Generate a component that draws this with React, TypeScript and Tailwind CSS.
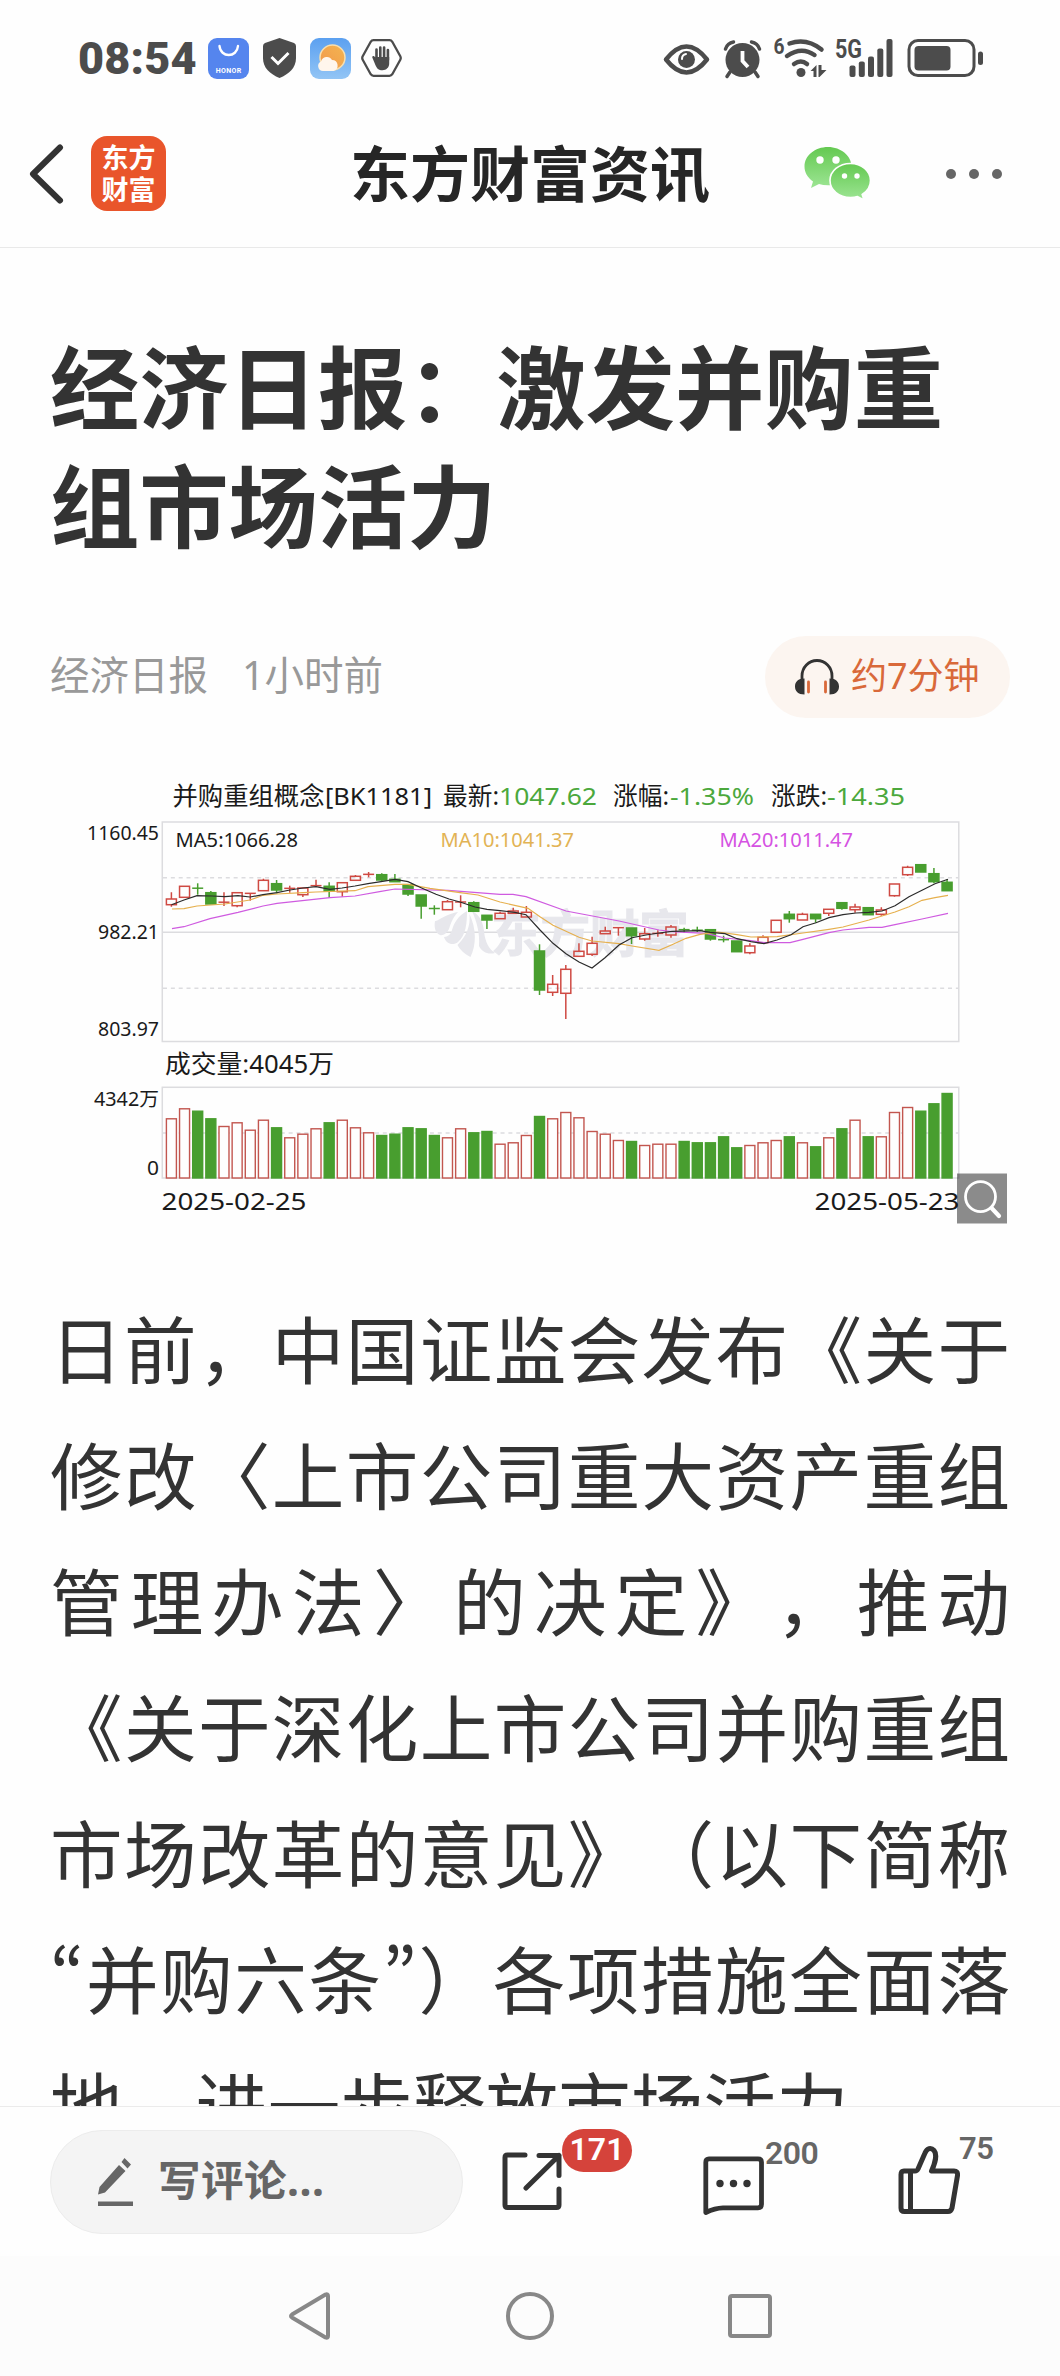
import type { ReactNode } from "react";

type Candle = [up: number, top: number, bottom: number, high: number, low: number, volume: number];

// up (1 = red), body top, body bottom, high, low, top of the volume bar
const candles: Candle[] = [
  [1, 899, 904.7, 892.3, 906.7, 1118.3],
  [1, 886.3, 897.3, 886.3, 897.3, 1108.3],
  [0, 887.7, 888.7, 883.3, 894.7, 1110.7],
  [0, 892.7, 904, 891, 904, 1118.3],
  [1, 901.7, 902.7, 892.3, 906, 1126],
  [1, 892.7, 905.7, 892, 907.3, 1122.3],
  [1, 893, 893.7, 893, 900.7, 1129.7],
  [1, 880.3, 890.7, 878.7, 890.7, 1119.7],
  [0, 883.7, 890, 880, 893.3, 1127.3],
  [1, 888, 888.7, 885.7, 892.7, 1137.3],
  [1, 888, 894.7, 888, 897, 1133.7],
  [1, 885.3, 886, 879.7, 886.7, 1128.3],
  [0, 886.3, 891, 882.3, 897.7, 1122.3],
  [1, 882.7, 891.7, 882.7, 896.7, 1119.7],
  [1, 876.3, 880.3, 875, 880.3, 1127.3],
  [1, 874, 874.7, 872, 877.3, 1132.3],
  [0, 874.7, 880, 873.3, 881, 1135],
  [0, 879.3, 881.7, 874, 881.7, 1133.7],
  [0, 884.7, 894, 884.7, 896, 1127.3],
  [0, 895, 906, 895, 918.7, 1128.3],
  [0, 908, 909, 905.3, 914.7, 1135],
  [1, 901.7, 909.7, 900, 909.7, 1137.3],
  [1, 901.7, 902.3, 895.3, 907.3, 1128.3],
  [0, 902.7, 911.3, 901.3, 911.3, 1132.3],
  [0, 915.3, 920, 915.3, 929, 1131],
  [1, 913.3, 918.7, 911.7, 918.7, 1143.7],
  [1, 911, 913.3, 907.7, 913.3, 1142.3],
  [1, 912.3, 917, 906, 917, 1135],
  [0, 951, 990, 944.3, 995, 1116],
  [1, 984.3, 992.3, 975, 996, 1118.3],
  [1, 969.3, 993.3, 965, 1019, 1112],
  [1, 951.3, 956.3, 943.3, 956.3, 1117.3],
  [1, 943.3, 954.3, 936.7, 956, 1131],
  [1, 931, 933.7, 926.7, 933.7, 1133.7],
  [1, 927, 928.3, 927, 935.7, 1140],
  [0, 928, 935.7, 928, 944, 1141],
  [1, 933.7, 939, 928, 940.7, 1145],
  [1, 933, 933.7, 930.3, 936.7, 1143.7],
  [1, 927, 935, 925, 937.7, 1143.7],
  [0, 929.3, 930, 927.7, 932.7, 1141],
  [0, 929.7, 930.7, 926.7, 932, 1142.3],
  [0, 929.7, 939, 929.7, 940.7, 1142.3],
  [0, 939.3, 940, 935.7, 942.3, 1136.3],
  [0, 941, 951.7, 941, 951.7, 1147.3],
  [1, 946, 952.7, 943.3, 954.3, 1145],
  [1, 937.3, 942.7, 935.3, 943, 1142.3],
  [1, 920.3, 932.3, 920.3, 932.3, 1140],
  [0, 914.3, 918.7, 911, 922.7, 1136.3],
  [1, 914.3, 920, 912.7, 920, 1142.3],
  [0, 914.3, 918.7, 914.3, 922.7, 1146.3],
  [1, 909.3, 913.3, 909.3, 916, 1137.3],
  [0, 902.7, 908.3, 902.7, 909.7, 1128.3],
  [1, 907, 909.7, 903.7, 912.7, 1119.7],
  [0, 907.7, 914.7, 907.7, 914.7, 1136.3],
  [1, 910, 914.3, 907.3, 915.7, 1136.3],
  [1, 884, 895.7, 884, 896.7, 1112],
  [1, 867.3, 874.7, 865.7, 876, 1107],
  [0, 864.7, 872, 864.7, 872, 1110.7],
  [0, 873.7, 881.7, 868, 883.3, 1103.3],
  [0, 882.3, 890.7, 879.3, 890.7, 1093],
];

const ma5 =
  "171.5,904.7 184,900 197,895.7 212,896 225,896.7 238,895.7 250,897 263,894.7 277,892.7 290,890 303,888 316,886.7 330,889.3 342,888 355,886 368,883.7 381,881.7 395,879.3 408,881.7 421,887.7 436,894.3 449,899 460,902 475,907 487,909.3 500,910.7 515,912.3 526,914.7 540,930 553,943.3 566,953.7 579,962 592,968 605,957.7 619,945 632,937.7 646,935 659,933 672,931.3 700,930.7 710,932.3 725,933.7 737,938.7 751,941.7 764,943.7 777,940 791,934.7 803,926.7 816,922.7 829,917.7 843,914.7 856,913 869,912.3 882,911 895,905.7 909,896.7 922,890.3 935,883.7 948,879.3";
const ma10 =
  "172,909 184,908.7 197,906 225,904 250,900 263,895.3 277,894 303,892.7 316,892 355,890.7 368,886.7 395,884.3 408,884.3 430,888.3 460,892.7 478,895 500,902 528,908.3 540,916.7 553,925.3 579,937.3 592,941 619,943.7 632,946 659,950.3 672,944.7 686,938.3 700,934.3 718,932 737,934.7 751,937 777,936.7 803,933 829,929.3 843,927 869,920 882,916 895,912 909,906.7 922,900.3 935,897.7 948,895.3";
const ma20 =
  "172,928.7 184,926.7 210,918.7 238,912.3 263,906 277,903.3 330,897.7 355,896 381,891.3 395,889 448,890.3 500,894.3 513,894.3 526,896.7 566,911 619,921 659,930 672,931.7 706,933.3 725,938 751,940.7 764,942.7 790,942.7 803,939.3 829,932.7 843,930 869,927.3 882,927.3 895,924.7 922,919 948,913.3";

type Label = { x: number; y: number; w: number; size: number; color: string; text: string };

const labels: Label[] = [
  { x: 172.5, y: 805, w: 152, size: 25, color: "#1a1a1a", text: "并购重组概念" },
  { x: 325, y: 804.5, w: 107, size: 24, color: "#1a1a1a", text: "[BK1181]" },
  { x: 443, y: 805, w: 56, size: 25, color: "#1a1a1a", text: "最新:" },
  { x: 499, y: 804.5, w: 98, size: 24, color: "#4ba83c", text: "1047.62" },
  { x: 613, y: 805, w: 56, size: 25, color: "#1a1a1a", text: "涨幅:" },
  { x: 670, y: 804.5, w: 84, size: 24, color: "#4ba83c", text: "-1.35%" },
  { x: 771, y: 805, w: 56, size: 25, color: "#1a1a1a", text: "涨跌:" },
  { x: 827, y: 804.5, w: 78, size: 24, color: "#4ba83c", text: "-14.35" },
  { x: 87, y: 840, w: 72, size: 19.5, color: "#1a1a1a", text: "1160.45" },
  { x: 98, y: 938.5, w: 61, size: 19.5, color: "#1a1a1a", text: "982.21" },
  { x: 98, y: 1036, w: 61, size: 19.5, color: "#1a1a1a", text: "803.97" },
  { x: 175.5, y: 846.5, w: 122.5, size: 19.5, color: "#1a1a1a", text: "MA5:1066.28" },
  { x: 440.5, y: 846.5, w: 133.5, size: 19.5, color: "#e2b354", text: "MA10:1041.37" },
  { x: 719.5, y: 846.5, w: 133.5, size: 19.5, color: "#d552e2", text: "MA20:1011.47" },
  { x: 165, y: 1072.5, w: 169, size: 24.5, color: "#1a1a1a", text: "成交量:4045万" },
  { x: 94, y: 1105.5, w: 65, size: 19.5, color: "#1a1a1a", text: "4342万" },
  { x: 147, y: 1175, w: 12, size: 19.5, color: "#1a1a1a", text: "0" },
  { x: 161.5, y: 1209.5, w: 145, size: 24, color: "#1a1a1a", text: "2025-02-25" },
  { x: 814.5, y: 1209.5, w: 145, size: 24, color: "#1a1a1a", text: "2025-05-23" },
];

const lines: ReactNode[] = [
  "日前，中国证监会发布《关于",
  "修改〈上市公司重大资产重组",
  "管理办法〉的决定》，推动",
  "《关于深化上市公司并购重组",
  "市场改革的意见》（以下简称",
  <>
    <Quote>“</Quote>并购六条<Quote>”</Quote>）各项措施全面落
  </>,
];

// proportional curly quotes of the CJK face
function Quote({ children }: { children: string }) {
  return <span className="font-['Noto_Sans_CJK_SC'] leading-none [font-feature-settings:'pwid']">{children}</span>;
}

function StatusBar() {
  return (
    <div className="flex h-[104px] items-center justify-between pt-3 pr-[76px] pl-[78px]">
      <div className="flex items-center">
        <span className="w-[130px] font-[Roboto] text-[45px] leading-none font-black tracking-[0.2px] text-[#4c4c4c]">
          08:54
        </span>
        <svg width="41" height="41" viewBox="0 0 41 41">
          <rect width="41" height="41" rx="9" fill="#5585ee" />
          <path d="M11.500 8c1 12 17.500 12 18.500 0" fill="none" stroke="#fff" strokeWidth="2.400" strokeLinecap="round" />
          <text x="7.800" y="35" fontSize="7" fontWeight="700" fontFamily="Roboto" fill="#fff" textLength="25.500">
            HONOR
          </text>
        </svg>
        <svg className="ml-[14px]" width="33" height="40" viewBox="0 0 33 40">
          <path d="M16.500 0 31 5q2 1 2 3v12c0 10-7 16-16.500 20C7 36 0 30 0 20V8q0-2 2-3Z" fill="#4c4c4c" />
          <path d="m8.500 19 6.500 6.500L25.500 15" fill="none" stroke="#fff" strokeWidth="3" />
        </svg>
        <svg className="ml-[14px]" width="41" height="41" viewBox="0 0 41 41">
          <defs>
            <linearGradient id="sky" x2="0" y2="1">
              <stop stopColor="#5ba0f0" />
              <stop offset="1" stopColor="#93c5f5" />
            </linearGradient>
            <linearGradient id="sun" x1="1" x2="0" y2="1">
              <stop stopColor="#f3b551" />
              <stop offset="1" stopColor="#f2974a" />
            </linearGradient>
          </defs>
          <rect width="41" height="41" rx="9" fill="url(#sky)" />
          <circle cx="22.500" cy="19.500" r="12.500" fill="url(#sun)" stroke="#f8dfae" strokeWidth="1.500" />
          <path d="M13 33a5 5 0 0 1-2-9.500 6 6 0 0 1 11-1.500 5.600 5.600 0 0 1 1.500 11Z" fill="#fff6ec" />
        </svg>
        <svg className="ml-[10px]" width="41" height="38" viewBox="0 0 41 38">
          <path
            d="M12.500 1.200h16q1.800 0 2.800 1.600l8 14.500q.9 1.700 0 3.400l-8 14.500q-1 1.600-2.800 1.600h-16q-1.800 0-2.800-1.600l-8-14.500q-.9-1.700 0-3.400l8-14.500q1-1.600 2.800-1.600Z"
            fill="none"
            stroke="#4c4c4c"
            strokeWidth="2.300"
          />
          <path
            d="M15.500 21V10.500M19.300 20V8.500M23.100 20V8.500M26.900 21V11"
            stroke="#4c4c4c"
            strokeWidth="2.600"
            strokeLinecap="round"
          />
          <path d="M14.200 18h14v6.500c0 4-3 6.700-6.700 6.700-4 0-5.700-2-7-5l-3.200-7.700c-.4-1.500 1.600-2 2.400-.8l1.500 2.500Z" fill="#4c4c4c" />
        </svg>
      </div>

      <svg className="overflow-visible" width="320" height="42" viewBox="664 37 320 42" fill="#4c4c4c">
        <path d="M666 59.500q20.500-26 41 0-20.500 26-41 0Z" fill="none" stroke="#4c4c4c" strokeWidth="4.500" strokeLinejoin="round" />
        <circle cx="686.500" cy="59.500" r="8.500" />
        <path d="M682 59a5 5 0 0 1 4-5" fill="none" stroke="#fff" strokeWidth="2" strokeLinecap="round" />
        <circle cx="742.500" cy="60" r="17" />
        <path d="M725.500 49q2-6 8-7M759.500 49q-2-6-8-7M730 72l-3 4.500M755 72l3 4.500" fill="none" stroke="#4c4c4c" strokeWidth="3.500" strokeLinecap="round" />
        <path d="M742.500 51v10l5.500 6" fill="none" stroke="#fff" strokeWidth="3.800" />
        <text x="773.500" y="54" fontSize="22" fontWeight="700" fontFamily="Roboto" textLength="11" lengthAdjust="spacingAndGlyphs">
          6
        </text>
        <g fill="none" stroke="#4c4c4c" strokeWidth="4.500" strokeLinecap="round">
          <path d="M789.500 43.500q17-6 32 6" />
          <path d="M787 56q14.500-10 27.500-1" />
          <path d="M794 64q7-5 13 0" />
        </g>
        <circle cx="801" cy="72.500" r="4.500" />
        <path d="M810.500 71l6-6v12h-3v-6ZM818.500 65h3v5h5l-7 7h-1Z" />
        <text x="835" y="58" fontSize="25" fontWeight="700" fontFamily="Roboto" textLength="27" lengthAdjust="spacingAndGlyphs">
          5G
        </text>
        <rect x="849.500" y="65.500" width="6" height="11.500" rx="2" />
        <rect x="858.800" y="61.500" width="6" height="15.500" rx="2" />
        <rect x="868" y="56.500" width="6" height="20.500" rx="2" />
        <rect x="877.300" y="48.500" width="6" height="28.500" rx="2" />
        <rect x="886.500" y="39" width="6" height="38" rx="2" />
        <rect x="909" y="40.500" width="65" height="35" rx="9" fill="none" stroke="#4c4c4c" strokeWidth="3" />
        <rect x="914.500" y="46" width="36" height="24.500" rx="4" />
        <rect x="978" y="51.500" width="5" height="13.500" rx="2.500" />
      </svg>
    </div>
  );
}

function Header() {
  return (
    <header className="relative flex h-[144px] items-center border-b border-[#e9e9e9] pb-[4px] pl-[29px]">
      <svg width="35" height="60" viewBox="0 0 35 60" fill="none" stroke="#333" strokeWidth="6" strokeLinecap="round" strokeLinejoin="round">
        <path d="M31 3.500 4 30l27 26.500" />
      </svg>
      <div className="ml-[27px] flex size-[75px] flex-col items-center justify-center rounded-[16px] bg-[#e9552b] text-[27px] leading-[32px] font-bold text-white">
        <span>东方</span>
        <span>财富</span>
      </div>
      <h2 className="ml-[184px] pt-px text-[60px] leading-none font-bold text-[#262626]">东方财富资讯</h2>
      <svg className="ml-[94px]" width="67" height="56" viewBox="0 0 67 56">
        <defs>
          <linearGradient id="wx" x2="0" y2="1">
            <stop stopColor="#64c951" />
            <stop offset="1" stopColor="#9de594" />
          </linearGradient>
        </defs>
        <path d="M24 1C11 1 .5 9.500.5 20.500c0 6 3 11 8.500 15L7 42l8-4q4 1.300 9 1.300C37 39.300 47.500 31 47.500 20.500S37 1 24 1Z" fill="url(#wx)" />
        <path
          d="M46.500 17.500c-11.500 0-20.500 7.500-20.500 17s9 17 20.500 17q4 0 7-1l6.500 3.500-1.800-5.500c5-3.200 8.300-8 8.300-14 0-9.500-9-17-20-17Z"
          fill="url(#wx)"
          stroke="#fefefe"
          strokeWidth="1.600"
        />
        <g fill="#fff">
          <circle cx="16" cy="14" r="3.700" />
          <circle cx="32" cy="14" r="3.700" />
          <circle cx="40.500" cy="30" r="2.700" />
          <circle cx="53" cy="30" r="2.700" />
        </g>
      </svg>
      <div className="ml-[75px] flex gap-[13px]">
        <i className="size-[10px] rounded-full bg-[#666]" />
        <i className="size-[10px] rounded-full bg-[#666]" />
        <i className="size-[10px] rounded-full bg-[#666]" />
      </div>
    </header>
  );
}

function Chart() {
  return (
    <svg className="block" width="960" height="460" viewBox="50 770 960 460" fontFamily="'Noto Sans', 'Noto Sans CJK SC', sans-serif">
      <g fill="none" stroke="#dcdcdf" strokeWidth="1.500">
        <rect x="162.300" y="822" width="796.500" height="219.500" />
        <path d="M162 932.300h797" />
        <rect x="162.300" y="1087.300" width="796.500" height="90.700" />
        <path d="M163 877.700h796M163 988.300h796M163 1133h796" strokeDasharray="4 3.850" />
      </g>

      {/* watermark */}
      <g fill="#e7e7ec">
        <path d="M435 921c4 0 8-6 23-9-5 5-7 11-9 17-2 4-6 7-9 6-5-2-6-8-5-14Z" />
        <path d="M467 911c-9 5-13 12-15 19-1 4-4 7-8 7 2 7 9 9 14 5 8-7 9-19 9-31Z" />
        <path d="M469.500 914c1 12-3 22-12 31 2 4 7 9 13 12 6-12 6-28-1-43Z" />
        <path d="M472 911c9 5 11 12 12 20 1 11 5 18 11 22-7 2-13-1-16-7 1-12-2-24-7-35Z" />
        <text x="491" y="952" fontSize="50" fontWeight="700" textLength="198" stroke="#e7e7ec" strokeWidth="1">
          东方财富
        </text>
      </g>

      {candles.map(([up, top, bottom, high, low, volume], i) => {
        const x = 171.4 + i * 13.147;
        const flat = bottom - top < 1.5;
        const color = up ? "#cf4a43" : "#489e2f";
        return (
          <g key={i} stroke={color} strokeWidth="1.500" fill={up ? "#fefefe" : color}>
            {(flat || !up) && <path d={`M${x} ${high}V${low}`} />}
            {!flat && !!up && <path d={`M${x} ${high}V${top}M${x} ${bottom}V${low}`} />}
            {flat ? (
              <path d={`M${x - 5.5} ${(top + bottom) / 2}h11`} />
            ) : (
              <rect x={x - 5} y={top} width="10" height={bottom - top} fillOpacity={up ? 0 : 1} />
            )}
            <rect x={x - 5} y={volume + 0.5} width="10" height={1177.5 - volume} strokeWidth="1.400" stroke={up ? "#c2564f" : color} />
          </g>
        );
      })}

      <g fill="none" strokeWidth="1.200">
        <polyline points={ma20} stroke="#cf5be0" />
        <polyline points={ma10} stroke="#e6b04e" />
        <polyline points={ma5} stroke="#2b2b2b" />
      </g>

      {labels.map((l) => (
        <text key={l.text} x={l.x} y={l.y} fontSize={l.size} fill={l.color} textLength={l.w} lengthAdjust="spacingAndGlyphs">
          {l.text}
        </text>
      ))}

      <rect x="957" y="1173.500" width="50" height="50" fill="#000" fillOpacity="0.450" />
      <g fill="none" stroke="#fff" strokeWidth="2.800" strokeLinecap="round">
        <circle cx="980.500" cy="1196.700" r="15" />
        <path d="m992 1208.500 7 7.500" strokeWidth="4.200" />
      </g>
    </svg>
  );
}

function Action({ children, count }: { children: ReactNode; count: ReactNode }) {
  return (
    <button className="relative block">
      {children}
      {count}
    </button>
  );
}

function Footer() {
  return (
    <footer className="flex h-[150px] border-t border-[#ebebeb] bg-[#fefefe] pl-[50px]">
      <div className="mt-[23px] flex h-[104px] w-[413px] items-center rounded-full border border-[#ececec] bg-[#f4f4f4] pl-[47px]">
        <svg width="35" height="48" viewBox="0 0 35 48" fill="#666">
          <path d="m21 7 6.500 6L7 34.500 0 36.500 1.500 29ZM26.500 0 33 6.500l-3.500 4-6-6.500ZM0 43.500h35V48H0Z" />
        </svg>
        <span className="ml-[25px] pb-[3px] text-[42.5px] leading-none font-bold tracking-[0.5px] text-[#666]">
          写评论...
        </span>
      </div>
      <div className="mt-[38px] ml-[39px] flex h-[70px] items-end">
        <Action
          count={
            <span className="absolute -top-[22px] left-[60px] flex h-[43px] w-[70px] items-center justify-center rounded-full bg-[#d5433b] pb-[3px] font-[Roboto] text-[32px] font-semibold text-white">
              171
            </span>
          }
        >
          <svg className="mb-[4px] block" width="60" height="60" viewBox="0 0 60 60" fill="none" stroke="#333" strokeWidth="5" strokeLinecap="round" strokeLinejoin="round">
            <path d="M23 4H5.500Q3 4 3 6.500V54q0 2.500 2.500 2.500h49Q57 56.500 57 54V38" />
            <path d="M37 4.500h20v20M57 4.500 24 37" />
          </svg>
        </Action>
        <div className="ml-[141px]">
          <Action
            count={
              <span className="absolute -top-[19px] left-[62px] font-[Roboto] text-[32px] leading-none font-semibold tracking-[-0.5px] text-[#666]">
                200
              </span>
            }
          >
            <svg className="block" width="61" height="59" viewBox="0 0 61 59" fill="none" stroke="#333" strokeWidth="4.800" strokeLinejoin="round">
              <path d="M6 2.800h49q3.500 0 3.500 3.500v42q0 3.500-3.500 3.500H20Q12 52 2.800 56.500V6.300Q2.800 2.800 6 2.800Z" />
              <g fill="#333" stroke="none">
                <circle cx="17" cy="27.500" r="3.700" />
                <circle cx="30.500" cy="27.500" r="3.700" />
                <circle cx="44" cy="27.500" r="3.700" />
              </g>
            </svg>
          </Action>
        </div>
        <div className="ml-[134px]">
          <Action
            count={
              <span className="absolute -top-[12px] left-[61px] font-[Roboto] text-[31px] leading-none font-semibold tracking-[-0.5px] text-[#666]">
                75
              </span>
            }
          >
            <svg className="block" width="62" height="70" viewBox="0 0 62 70" fill="none" stroke="#333" strokeWidth="5" strokeLinejoin="round">
              <path d="M6 26h11q2 0 3-2l7-16c2-5 6-6 9-2.500s1.500 12-2.500 20.500H56q4 0 3.500 4.500l-5.500 32.500q-1 3.500-4 3.500H6.500q-3.500 0-3.500-3.500V29.500Q3 26 6 26ZM12.500 26v40" />
            </svg>
          </Action>
        </div>
      </div>
    </footer>
  );
}

function NavBar() {
  return (
    <nav className="flex h-[120px] items-center justify-between bg-[#fcfcfc] pr-[288px] pl-[287px]">
      <svg width="44" height="50" viewBox="0 0 44 50" fill="none" stroke="#888" strokeWidth="4" strokeLinejoin="round">
        <path d="M38.500 3.500q2.500-1 2.500 1.500v40q0 2.500-2.500 1.500L5 26.500q-2-1.500 0-3Z" />
      </svg>
      <div className="size-[48px] rounded-full border-4 border-[#888]" />
      <div className="size-[44px] rounded-[4px] border-4 border-[#888]" />
    </nav>
  );
}

function App() {
  return (
    <div className="flex h-[2376px] w-[1060px] flex-col overflow-hidden bg-[#fefefe] font-['Noto_Sans','Noto_Sans_CJK_SC',sans-serif]">
      <StatusBar />
      <Header />
      <main className="h-[1858px] overflow-hidden px-[50px] pt-[80px]">
        <h1 className="text-[89.3px] leading-[119px] font-bold text-[#333] [text-spacing-trim:space-all]">
          经济日报：激发并购重组市场活力
        </h1>
        <div className="mt-[70px] flex h-[82px] items-center justify-between">
          <div className="flex gap-[34px] pb-[3px] text-[39.5px] text-[#999]">
            <span>经济日报</span>
            <span>1小时前</span>
          </div>
          <div className="flex h-[82px] w-[245px] items-center rounded-full bg-[#fcf5f0] pl-[30px] text-[#d9693a]">
            <svg width="44" height="36" viewBox="0 0 44 36" fill="none">
              <path d="M7 22v-5a15 15.500 0 0 1 30 0v5" stroke="#333" strokeWidth="2.800" />
              <path d="M9.500 19.500v16C3 35.500 0 32 0 27.500s3-8 9.500-8ZM34.500 19.500v16c6.500 0 9.500-3.500 9.500-8s-3-8-9.500-8Z" fill="#333" />
              <path d="M13.500 23v10M30.500 23v10" stroke="#d9693a" strokeWidth="2.800" strokeLinecap="round" />
            </svg>
            <span className="ml-[12px] pb-[3px] text-[36px]">约7分钟</span>
          </div>
        </div>
        <div className="mt-[52px]">
          <Chart />
        </div>
        <article className="mt-[57px] text-[72.6px] leading-[126px] text-[#333] [text-spacing-trim:space-all]">
          {lines.map((line, i) => (
            <p key={i} className="h-[126px] whitespace-nowrap [text-align-last:justify]">
              {line}
            </p>
          ))}
          <p className="whitespace-nowrap">地，进一步释放市场活力。</p>
        </article>
      </main>
      <Footer />
      <NavBar />
    </div>
  );
}

export default App;
